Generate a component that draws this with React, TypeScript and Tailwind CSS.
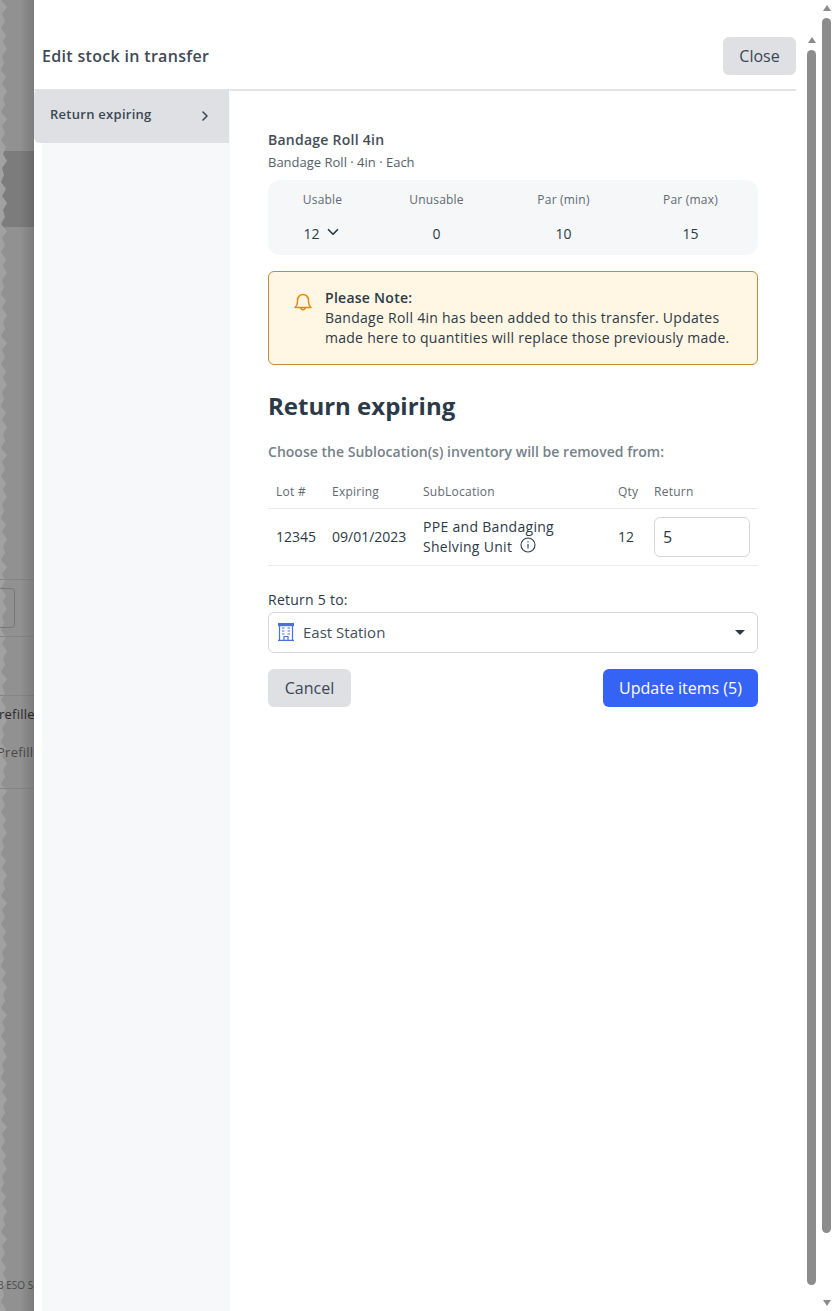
import { ChevronDown, ChevronRight } from "lucide-react";

const font = "font-['Open_Sans','Noto_Sans',sans-serif]";

const stats = [
  { label: "Usable", value: "12", chevron: true },
  { label: "Unusable", value: "0" },
  { label: "Par (min)", value: "10" },
  { label: "Par (max)", value: "15" },
];

// the page behind the drawer, seen through the dimmed strip on the left
function Backdrop() {
  const widths = [1, 7, 2, 5, 1, 6, 3, 7, 2, 4, 1, 6, 2, 7, 3, 5];
  const edge = Array.from({ length: 190 }, (_, i) => `${widths[i % 16]},${i * 7}`).join(" ");
  return (
    <div className="relative h-full w-[34px] shrink-0 overflow-hidden bg-[#919191]">
      <div className="absolute left-0 top-[151px] h-[76px] w-full bg-[#7c7c7c]" />
      <svg className="absolute left-0 top-0" width="8" height="1311">
        <polygon points={`0,0 ${edge} 0,1330`} fill="#a1a1a1" />
      </svg>
      <div className="absolute left-[-20px] top-[588px] h-[40px] w-[35px] rounded border border-[#777777]" />
      <div className="absolute left-0 top-[579px] h-px w-full bg-[#858585]" />
      <div className="absolute left-0 top-[636px] h-px w-full bg-[#858585]" />
      <div className="absolute left-0 top-[695px] h-px w-full bg-[#858585]" />
      <div className="absolute left-0 top-[788px] h-px w-full bg-[#858585]" />
      <span className="absolute left-[-1px] top-[705px] whitespace-nowrap text-[13px] font-medium tracking-[0.25px] text-[#2a2a2a]">refilled</span>
      <span className="absolute left-[-3px] top-[743px] whitespace-nowrap text-[13px] tracking-[0.25px] text-[#4a4a4a]">Prefilled</span>
      <span className="absolute left-[-2px] top-[1278px] whitespace-nowrap text-[10px] text-[#4a4a4a]">3 ESO Solutions</span>
      <div className="absolute inset-y-0 right-0 w-[14px] bg-gradient-to-r from-transparent to-[#00000026]" />
    </div>
  );
}

function Scrollbar({ thumbTop, thumbBottom, arrowTop, right }: { thumbTop: string; thumbBottom: string; arrowTop: string; right: string }) {
  return (
    <>
      <div className={`absolute w-0 h-0 border-x-[4px] border-x-transparent border-b-[6px] border-b-[#8c8c8c] ${arrowTop} ${right}`} />
      <div className={`absolute w-[9px] rounded-full bg-[#8c8c8c] ${thumbTop} ${thumbBottom} ${right}`} />
    </>
  );
}

export default function App() {
  return (
    <div className={`relative flex h-[1311px] w-[834px] overflow-hidden bg-white text-[#2c3a47] ${font}`}>
      <Backdrop />

      <div className="flex h-full flex-1 flex-col pr-[38px]">
        <header className="flex h-[91px] shrink-0 items-center justify-between border-b-2 border-[#e3e4e6] pl-[8px] pt-[22px]">
          <h1 className="text-[16px] font-semibold tracking-[0.32px] text-[#3f4a55]">Edit stock in transfer</h1>
          <button className="h-[38px] w-[73px] rounded-md bg-[#dee0e3] text-[16px] text-[#3a4753]">Close</button>
        </header>

        <div className="flex min-h-0 flex-1">
          <aside className="relative ml-[8px] mt-[-2px] w-[188px] shrink-0 bg-[#f7f8fa]">
            <div className="-ml-[8px] flex h-[54px] w-[195px] items-center justify-between rounded-l-md bg-[#dee0e3] pb-[2px] pl-[16px] pr-[16px]">
              <span className="text-[13px] font-semibold tracking-[0.27px] text-[#3a4753]">Return expiring</span>
              <ChevronRight size={16} strokeWidth={2.4} className="mt-[2px] text-[#3a4753]" />
            </div>
          </aside>

          <main className="min-w-0 flex-1 pl-[38px] pr-[38px] pt-[39px]">
            <h2 className="text-[14px] font-semibold leading-[20px] tracking-[0.25px] text-[#444d56]">Bandage Roll 4in</h2>
            <p className="mt-[3px] text-[13px] leading-[18px] text-[#555f68]">Bandage Roll · 4in · Each</p>

            <div className="mt-[9px] grid h-[75px] grid-cols-[101px_127px_127px_127px] rounded-xl bg-[#f6f7f8] px-[4px] pt-[11px] text-center">
              {stats.map((s) => (
                <div key={s.label}>
                  <div className="text-[12px] leading-[18px] tracking-[0.2px] text-[#5f6a73]">{s.label}</div>
                  <div className="mt-[15px] flex items-center justify-center gap-[4px] text-[14px] leading-[20px] text-[#2c3a47]">
                    {s.value}
                    {s.chevron && <ChevronDown size={18} strokeWidth={2.3} className="-mt-[5px]" />}
                  </div>
                </div>
              ))}
            </div>

            <div className="mt-[16px] flex h-[94px] rounded-md border border-[#c98a35] bg-[#fff6e3] pl-[24px] pt-[16px]">
              <svg className="mt-[4px] shrink-0" width="20" height="20" viewBox="0 0 20 20" fill="none" stroke="#e58a12" strokeWidth="1.5" strokeLinejoin="round">
                <path d="M2 15.500c1.600-1.500 2.500-2.600 2.500-5.500V8a5.500 5.500 0 0 1 11 0v2c0 2.900.9 4 2.500 5.500z" />
                <path d="M8 15.800a2 2 0 0 0 4 0" />
              </svg>
              <div className="ml-[12px] text-[14px] leading-[20px] tracking-[0.27px] text-[#2c3a47]">
                <div className="font-semibold">Please Note:</div>
                <div>Bandage Roll 4in has been added to this transfer. Updates<br />made here to quantities will replace those previously made.</div>
              </div>
            </div>

            <h2 className="mt-[23px] text-[24px] font-bold leading-[36px] text-[#2c3a47]">Return expiring</h2>
            <p className="mt-[18px] text-[14px] font-semibold leading-[20px] tracking-[0.02px] text-[#76818a]">Choose the Sublocation(s) inventory will be removed from:</p>

            <table className="mt-[10px] w-full table-fixed border-collapse text-left">
              <thead>
                <tr className="h-[36px] border-b border-[#e8e9eb] text-[12px] tracking-[0.25px] text-[#5f6a73]">
                  <th className="w-[64px] pl-[8px] pt-[5px] font-normal">Lot #</th>
                  <th className="w-[91px] pt-[5px] font-normal">Expiring</th>
                  <th className="w-[195px] pt-[5px] font-normal">SubLocation</th>
                  <th className="w-[36px] pt-[5px] font-normal">Qty</th>
                  <th className="pt-[5px] font-normal">Return</th>
                </tr>
              </thead>
              <tbody>
                <tr className="h-[57px] border-b border-[#e8e9eb] text-[14px] leading-[20px]">
                  <td className="pl-[8px]">12345</td>
                  <td>09/01/2023</td>
                  <td className="tracking-[0.3px]">
                    PPE and Bandaging<br />
                    <span className="inline-flex items-center gap-[8px]">
                      Shelving Unit
                      <svg className="-mt-[3px]" width="16" height="16" viewBox="0 0 16 16" fill="none" stroke="#2c3a47" strokeWidth="1.1">
                        <circle cx="8" cy="8" r="7" />
                        <path d="M8 7v4.500M8 4.200v1.200" />
                      </svg>
                    </span>
                  </td>
                  <td>12</td>
                  <td>
                    <input readOnly value="5" className="h-[40px] w-[96px] rounded-md border border-[#d4d6d9] px-[8px] text-[16px] outline-none" />
                  </td>
                </tr>
              </tbody>
            </table>

            <label className="mt-[24px] block text-[14px] leading-[20px] tracking-[0.25px] text-[#2c3a47]">Return 5 to:</label>
            <div className="mt-[2px] flex h-[41px] items-center rounded-md border border-[#d4d6d9] pl-[9px] pr-[12px]">
              <svg width="16" height="18" viewBox="0 0 16 18" fill="none" stroke="#4a72d8" strokeWidth="1.2">
                <path d="M0 17.400h16M1.500 1h13v16.400h-13z" />
                <rect x="0.5" y="0.6" width="15" height="2" fill="#4a72d8" />
                <path d="M4 5h2.500M9.500 5H12M4 8h2.500M9.500 8H12M4 11h2.500M9.500 11H12M6 17v-3.500h4V17" />
              </svg>
              <span className="ml-[9px] flex-1 text-[15px] text-[#44505a]">East Station</span>
              <div className="h-0 w-0 border-x-[5px] border-t-[5px] border-x-transparent border-t-[#2c3a47]" />
            </div>

            <div className="mt-[16px] flex justify-between">
              <button className="h-[38px] w-[83px] rounded-md bg-[#dee0e3] text-[16px] text-[#3a4753]">Cancel</button>
              <button className="h-[38px] w-[155px] rounded-md bg-[#3563f6] text-[16px] text-white">Update items (5)</button>
            </div>
          </main>
        </div>
      </div>

      <Scrollbar thumbTop="top-[50px]" thumbBottom="bottom-[26px]" arrowTop="top-[37px]" right="right-[18px]" />
      <Scrollbar thumbTop="top-[18px]" thumbBottom="bottom-[78px]" arrowTop="top-[5px]" right="right-[3px]" />
      <div className="absolute bottom-[5px] right-[3px] h-0 w-0 border-x-[4px] border-t-[6px] border-x-transparent border-t-[#8c8c8c]" />
    </div>
  );
}
